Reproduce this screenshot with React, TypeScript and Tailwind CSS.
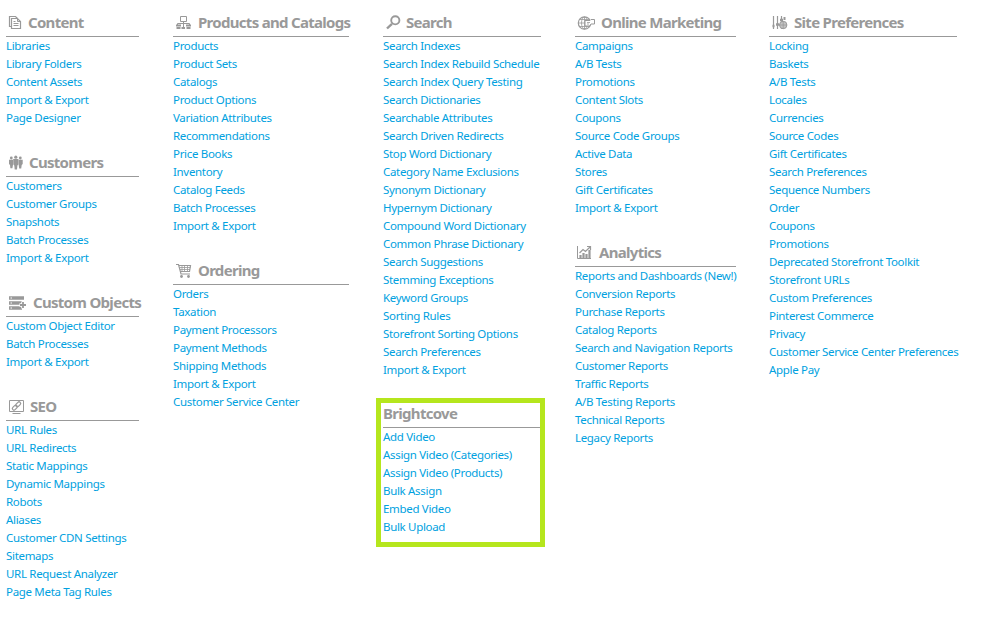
import type { ReactNode } from "react";

type Section = { title: string; icon?: ReactNode; links: string[] };

function Icon({ w, children }: { w: number; children: ReactNode }) {
  return (
    <svg width={w} height={29} viewBox={`0 0 ${w} 29`} fill="none" stroke="#999" className="shrink-0">
      {children}
    </svg>
  );
}

const ContentIcon = (
  <Icon w={22}>
    <path d="M5.5 19.5h-2v-10h6l2 2M5.5 11.5h6l3 3v7h-9z" strokeWidth="1.2" />
    <path d="M11.5 11.5v3h3M7.5 16.5h5M7.5 18.5h5M7.5 14.5h2" />
  </Icon>
);
const ProductsIcon = (
  <Icon w={25}>
    <path d="M7.5 9.5h6v5h-6zM10.5 14.5v2M4.5 18v-1.5h12V18" />
    <path d="M3 18.5h5M13 18.5h5" strokeWidth="2" />
    <path d="M3.5 21h4M8.5 21h3.5M13.5 21h4" strokeWidth="2" />
    <path d="M10.5 17v3" />
  </Icon>
);
const SearchIcon = (
  <Icon w={23}>
    <circle cx="12.3" cy="13.3" r="4.1" strokeWidth="1.9" />
    <path d="M9 16.8 4 21.5" strokeWidth="2.4" />
  </Icon>
);
const MarketingIcon = (
  <Icon w={26}>
    <circle cx="9.5" cy="16" r="6.2" strokeWidth="1.2" />
    <path d="M9.5 10v12M3.5 16h6M5 12.5h9M5 19.5h9" strokeWidth=".8" />
    <ellipse cx="9.5" cy="16" rx="3" ry="6" strokeWidth=".8" />
    <path d="M10 13.5h5l1-1h3.5v4.5H16l-1.5 2H10z" fill="white" />
    <path d="M12 15.5h3M12 17h2" strokeWidth=".8" />
  </Icon>
);
const PreferencesIcon = (
  <Icon w={25}>
    <path d="M4.5 9v13M8.5 9v13M12.5 9v13" strokeWidth="1.2" />
    <path d="M3.5 19h2M7 17.5h3M11 13h3" strokeWidth="2.4" />
    <circle cx="14.2" cy="18" r="3.7" fill="#c4c4c4" />
    <path d="M10.5 18h7.5M14.2 14v8" strokeWidth=".8" />
    <path d="M15.5 10v3" strokeWidth="2" />
  </Icon>
);
const CustomersIcon = (
  <Icon w={23}>
    <g fill="#999" stroke="none">
      <circle cx="5.3" cy="11" r="1.4" />
      <circle cx="14.3" cy="11" r="1.4" />
      <circle cx="9.8" cy="10.2" r="1.6" />
      <path d="M3 12.8h4v5l-.6 3.5H4.4L4 18l-1-1zM12.7 12.8h4V17l-1 1-.5 3.5h-2l-.5-3.5zM7.2 12h5.2v5.5l-1 1-.4 4H8.7l-.4-4-1-1z" />
    </g>
  </Icon>
);
const ObjectsIcon = (
  <Icon w={27}>
    <path d="M3 11h15M3 16h13M3 21h13" strokeWidth="3.7" />
    <path d="M4.5 11H6M4.5 16H6M4.5 21H6" stroke="white" />
    <path d="M17 14.5v7M13.5 18h7" stroke="white" strokeWidth="3.5" />
    <path d="M17 15v6M14 18h6" strokeWidth="1.8" />
  </Icon>
);
const SeoIcon = (
  <Icon w={24}>
    <path d="M3.5 9.5h14v11h-14zM6.5 22.5h8" />
    <g transform="rotate(-45 10.5 15)" strokeWidth="1.2">
      <rect x="5.3" y="13.4" width="5.7" height="3.2" rx="1.6" />
      <rect x="10" y="13.4" width="5.7" height="3.2" rx="1.6" />
    </g>
  </Icon>
);
const OrderingIcon = (
  <Icon w={25}>
    <path d="M3 9.5h2.5L8 19h9M6 10.5h11.5l-1 6H7.2" strokeWidth="1.2" />
    <path d="M6.5 12.5h11M7 14.5h10M9 11v6M11.5 11v6M14.5 11v6" strokeWidth=".8" />
    <circle cx="8.5" cy="21.5" r="1.4" fill="#999" stroke="none" />
    <circle cx="15.5" cy="21.5" r="1.4" fill="#999" stroke="none" />
  </Icon>
);
const AnalyticsIcon = (
  <Icon w={24}>
    <path d="M2.5 9v12.5H16" />
    <path d="M5.5 21v-3M8.5 21v-5M11.5 21v-4M14.5 21v-8" strokeWidth="2.2" />
    <path d="M4.5 16 8 12.5l2.5 2L15 10M12 9.5h3.5V13" strokeWidth="1.2" />
  </Icon>
);

const columns: { className: string; sections: Section[] }[] = [
  {
    className: "w-[133px] mr-[34px]",
    sections: [
      { title: "Content", icon: ContentIcon, links: ["Libraries", "Library Folders", "Content Assets", "Import & Export", "Page Designer"] },
      { title: "Customers", icon: CustomersIcon, links: ["Customers", "Customer Groups", "Snapshots", "Batch Processes", "Import & Export"] },
      { title: "Custom Objects", icon: ObjectsIcon, links: ["Custom Object Editor", "Batch Processes", "Import & Export"] },
      { title: "SEO", icon: SeoIcon, links: ["URL Rules", "URL Redirects", "Static Mappings", "Dynamic Mappings", "Robots", "Aliases", "Customer CDN Settings", "Sitemaps", "URL Request Analyzer", "Page Meta Tag Rules"] },
    ],
  },
  {
    className: "w-[176px] mr-[34px]",
    sections: [
      { title: "Products and Catalogs", icon: ProductsIcon, links: ["Products", "Product Sets", "Catalogs", "Product Options", "Variation Attributes", "Recommendations", "Price Books", "Inventory", "Catalog Feeds", "Batch Processes", "Import & Export"] },
      { title: "Ordering", icon: OrderingIcon, links: ["Orders", "Taxation", "Payment Processors", "Payment Methods", "Shipping Methods", "Import & Export", "Customer Service Center"] },
    ],
  },
  {
    className: "w-[158px] mr-[34px]",
    sections: [
      { title: "Search", icon: SearchIcon, links: ["Search Indexes", "Search Index Rebuild Schedule", "Search Index Query Testing", "Search Dictionaries", "Searchable Attributes", "Search Driven Redirects", "Stop Word Dictionary", "Category Name Exclusions", "Synonym Dictionary", "Hypernym Dictionary", "Compound Word Dictionary", "Common Phrase Dictionary", "Search Suggestions", "Stemming Exceptions", "Keyword Groups", "Sorting Rules", "Storefront Sorting Options", "Search Preferences", "Import & Export"] },
      { title: "Brightcove", links: ["Add Video", "Assign Video (Categories)", "Assign Video (Products)", "Bulk Assign", "Embed Video", "Bulk Upload"] },
    ],
  },
  {
    className: "w-[161px] mr-[33px]",
    sections: [
      { title: "Online Marketing", icon: MarketingIcon, links: ["Campaigns", "A/B Tests", "Promotions", "Content Slots", "Coupons", "Source Code Groups", "Active Data", "Stores", "Gift Certificates", "Import & Export"] },
      { title: "Analytics", icon: AnalyticsIcon, links: ["Reports and Dashboards (New!)", "Conversion Reports", "Purchase Reports", "Catalog Reports", "Search and Navigation Reports", "Customer Reports", "Traffic Reports", "A/B Testing Reports", "Technical Reports", "Legacy Reports"] },
    ],
  },
  {
    className: "w-[188px]",
    sections: [
      { title: "Site Preferences", icon: PreferencesIcon, links: ["Locking", "Baskets", "A/B Tests", "Locales", "Currencies", "Source Codes", "Gift Certificates", "Search Preferences", "Sequence Numbers", "Order", "Coupons", "Promotions", "Deprecated Storefront Toolkit", "Storefront URLs", "Custom Preferences", "Pinterest Commerce", "Privacy", "Customer Service Center Preferences", "Apple Pay"] },
    ],
  },
];

function MenuSection({ title, icon, links }: Section) {
  const highlighted = !icon;
  return (
    <section className={highlighted ? "-ml-[7px] mt-[-1px] w-[169px] border-[5px] border-[#b5e61d] pb-[6px] pl-[2px]" : ""}>
      <h2 className={`flex items-center border-b border-[#999] text-[15px] font-bold tracking-[-0.7px] whitespace-nowrap text-[#999] ${highlighted ? "h-[25px] pb-[3px]" : "h-[30px]"}`}>
        {icon}
        <span className={highlighted ? "" : "pt-[2px]"}>{title}</span>
      </h2>
      <ul>
        {links.map((link) => (
          <li key={link} className="h-[18px] text-[11.5px] leading-[18px] tracking-[-0.32px] whitespace-nowrap">
            <a href="#" className="text-[#00a1e0]">{link}</a>
          </li>
        ))}
      </ul>
    </section>
  );
}

export default function App() {
  return (
    <main className="flex h-[617px] w-[1001px] items-start overflow-hidden bg-white pt-[7px] pl-[6px] font-['Noto_Sans',sans-serif]">
      {columns.map((column) => (
        <div key={column.sections[0].title} className={`flex shrink-0 flex-col gap-5 ${column.className}`}>
          {column.sections.map((section) => (
            <MenuSection key={section.title} {...section} />
          ))}
        </div>
      ))}
    </main>
  );
}
